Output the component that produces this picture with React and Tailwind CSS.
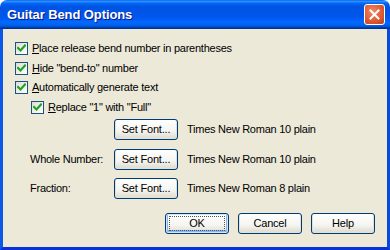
import React from "react";

const font = { fontFamily: "Tahoma, 'Liberation Sans', Arial, sans-serif" };

function Check({ label, u, className = "" }) {
  const rest = label.slice(1);
  return (
    <div className={"flex items-center h-[13px] " + className}>
      <div className="w-[13px] h-[13px] border border-[#1c5180] bg-[linear-gradient(135deg,#dcdcd7,#ffffff)] flex items-center justify-center shrink-0">
        <svg width="9" height="9" viewBox="0 0 9 9">
          <path d="M1 4 L3.5 6.5 L8 1.5" fill="none" stroke="#21a121" strokeWidth="2.2" strokeLinecap="square" />
        </svg>
      </div>
      <span className="ml-[4px] text-[11px] leading-[13px] tracking-[-0.25px] text-black whitespace-nowrap">
        <span className="underline">{u}</span>
        {rest}
      </span>
    </div>
  );
}

function Btn({ children, def = false, className = "" }) {
  return (
    <div
      className={
        "h-[21px] w-[64px] rounded-[3px] border border-[#003c74] bg-[linear-gradient(#ffffff,#f4f4f0_60%,#e6e3d8_85%,#d6d0c5)] flex items-center justify-center text-[11px] tracking-[-0.2px] text-black shrink-0 " +
        (def ? "shadow-[inset_0_0_0_1px_#cee7ff,inset_0_-1px_0_2px_#8fb3f0] " : "shadow-[inset_0_-1px_0_1px_#e3e0d5] ") +
        className
      }
    >
      {def ? (
        <div className="w-[56px] h-[15px] border border-dotted border-[#555] flex items-center justify-center">
          {children}
        </div>
      ) : (
        children
      )}
    </div>
  );
}

export default function App() {
  return (
    <div style={font} className="w-[390px] h-[250px] flex flex-col bg-white">
      {/* Title bar */}
      <div className="h-[29px] rounded-t-[7px] flex items-center pl-[7px] pr-[4px] bg-[linear-gradient(#0058ee_0%,#3593ff_4%,#288eff_6%,#127dff_8%,#036ffc_10%,#0262ee_14%,#0057e5_20%,#0054e3_24%,#0055eb_56%,#005bf5_66%,#026afe_76%,#0062ef_86%,#0052d6_92%,#0040ab_94%,#003092_100%)]">
        <span className="text-white font-bold text-[13px] tracking-[-0.1px] [text-shadow:1px_1px_0_#0a1883] flex-1 pt-[1px]">
          Guitar Bend Options
        </span>
        <div className="w-[21px] h-[21px] rounded-[3px] border border-white bg-[radial-gradient(circle_at_40%_35%,#f08a6a,#e05a33_55%,#c03c1c)] flex items-center justify-center mr-[1px]">
          <svg width="11" height="11" viewBox="0 0 11 11">
            <path d="M1.5 1.5 L9.5 9.5 M9.5 1.5 L1.5 9.5" stroke="#ffffff" strokeWidth="2" strokeLinecap="square" />
          </svg>
        </div>
      </div>
      {/* Body */}
      <div className="flex-1 bg-[#ece9d8] border-x-[3px] border-b-[3px] border-[#0831d9] [border-left-color:#0a57e8] [border-right-color:#0a4ad8] flex flex-col pl-[12px] pr-[9px] pt-[13px]">
        <Check label="Place release bend number in parentheses" u="P" />
        <Check label={'Hide "bend-to" number'} u="H" className="mt-[7px]" />
        <Check label="Automatically generate text" u="A" className="mt-[6px]" />
        <Check label={'Replace "1" with "Full"'} u="R" className="mt-[7px] ml-[16px]" />

        <div className="flex items-center mt-[5px] ml-[15px] text-[11px] tracking-[-0.25px]">
          <div className="w-[84px]" />
          <Btn>Set Font...</Btn>
          <span className="ml-[9px]">Times New Roman 10 plain</span>
        </div>
        <div className="flex items-center mt-[9px] ml-[15px] text-[11px] tracking-[-0.25px]">
          <div className="w-[84px]">Whole Number:</div>
          <Btn>Set Font...</Btn>
          <span className="ml-[9px]">Times New Roman 10 plain</span>
        </div>
        <div className="flex items-center mt-[8px] ml-[15px] text-[11px] tracking-[-0.25px]">
          <div className="w-[84px]">Fraction:</div>
          <Btn>Set Font...</Btn>
          <span className="ml-[9px]">Times New Roman 8 plain</span>
        </div>

        <div className="flex justify-end mt-[14px] pr-[3px] gap-[9px]">
          <Btn def>OK</Btn>
          <Btn>Cancel</Btn>
          <Btn className="w-[63px]">Help</Btn>
        </div>
      </div>
    </div>
  );
}
